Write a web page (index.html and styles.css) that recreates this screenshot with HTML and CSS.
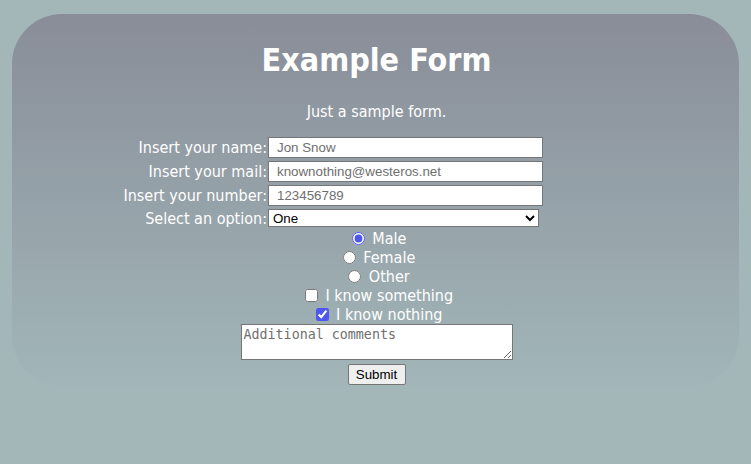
FILE: index.html
```html
<!DOCTYPE html>
<html>
<head>
<meta charset="utf-8">
<link rel="stylesheet" href="styles.css">
</head>
<body>
<div class="card">
  <h1 class="title">Example Form</h1>
  <p class="subtitle">Just a sample form.</p>
  <form class="form">
    <div class="row"><label class="lbl" for="n">Insert your name:</label><input class="field" id="n" type="text" placeholder="Jon Snow"></div>
    <div class="row"><label class="lbl" for="m">Insert your mail:</label><input class="field" id="m" type="email" placeholder="knownothing@westeros.net"></div>
    <div class="row"><label class="lbl" for="p">Insert your number:</label><input class="field" id="p" type="text" placeholder="123456789"></div>
    <div class="row row-sel"><label class="lbl" for="s">Select an option:</label><select class="sel" id="s"><option>One</option><option>Two</option></select></div>
    <div class="choice"><input class="radio" type="radio" name="g" id="r1" checked> <label for="r1">Male</label></div>
    <div class="choice"><input class="radio" type="radio" name="g" id="r2"> <label for="r2">Female</label></div>
    <div class="choice"><input class="radio" type="radio" name="g" id="r3"> <label for="r3">Other</label></div>
    <div class="choice"><input class="check" type="checkbox" id="c1"> <label for="c1">I know something</label></div>
    <div class="choice"><input class="check" type="checkbox" id="c2" checked> <label for="c2">I know nothing</label></div>
    <textarea class="comments" placeholder="Additional comments"></textarea>
    <button class="submit" type="button">Submit</button>
  </form>
</div>
</body>
</html>
```
FILE: styles.css
```css
html, body {
  margin: 0;
  background: #a3b7b9;
  height: 100%;
}
body {
  padding: 14px 12px 0;
  box-sizing: border-box;
  font-family: "DejaVu Sans Condensed", "DejaVu Sans", sans-serif;
  color: #fff;
}
.card {
  height: 372px;
  border-radius: 50px;
  background: linear-gradient(#898d98 0%, #9eb0b4 85%, #a2b5b8 100%);
  padding-top: 26px;
  box-sizing: border-box;
}
.title {
  margin: 0;
  text-align: center;
  font-size: 32px;
  font-weight: bold;
  line-height: 40px;
  padding-left: 2px;
}
.subtitle {
  margin: 22px 0 0;
  text-align: center;
  font-size: 16px;
  line-height: 19px;
  padding-left: 2px;
}
.form {
  margin-top: 16px;
  font-size: 16px;
}
.row {
  display: flex;
  align-items: center;
  height: 21px;
  margin-bottom: 3px;
}
.row-sel {
  height: 18px;
  margin-bottom: 2px;
}
.lbl {
  width: 255px;
  text-align: right;
  padding-right: 1px;
  line-height: 19px;
}
.field {
  width: 275px;
  height: 21px;
  box-sizing: border-box;
  margin: 0;
  border: 1px solid #767676;
  padding: 1px 8px;
  font-family: "Liberation Sans", Arial, sans-serif;
  font-size: 13.33px;
  background: #fff;
}
.field::placeholder {
  color: #6f6f6f;
}
.sel {
  width: 271px;
  height: 18px;
  box-sizing: border-box;
  margin: 0;
  padding: 0;
  border: 1px solid #767676;
  border-radius: 0;
  font-family: "Liberation Sans", Arial, sans-serif;
  font-size: 13.33px;
  background: #fff;
  color: #000;
}
.choice {
  text-align: center;
  line-height: 19px;
  height: 19px;
  padding-left: 2px;
}
.radio, .check {
  margin: 0 3px 0 5px;
  width: 13px;
  height: 13px;
  vertical-align: -1px;
  accent-color: #4f56f0;
}
.comments {
  display: block;
  width: 272px;
  height: 36px;
  box-sizing: border-box;
  margin: 0 auto;
  position: relative;
  left: 1px;
  padding: 2px;
  border: 1px solid #767676;
  font-family: "DejaVu Sans Mono", monospace;
  font-size: 13.33px;
  resize: both;
}
.comments::placeholder { color: #6f6f6f; }
.submit {
  display: block;
  margin: 4px auto 0;
  position: relative;
  left: 1px;
  width: 58px;
  height: 21px;
  padding: 0;
  border: 1px solid #767676;
  border-radius: 2px;
  background: #efefef;
  font-family: "Liberation Sans", Arial, sans-serif;
  font-size: 13.33px;
  color: #000;
}
```
